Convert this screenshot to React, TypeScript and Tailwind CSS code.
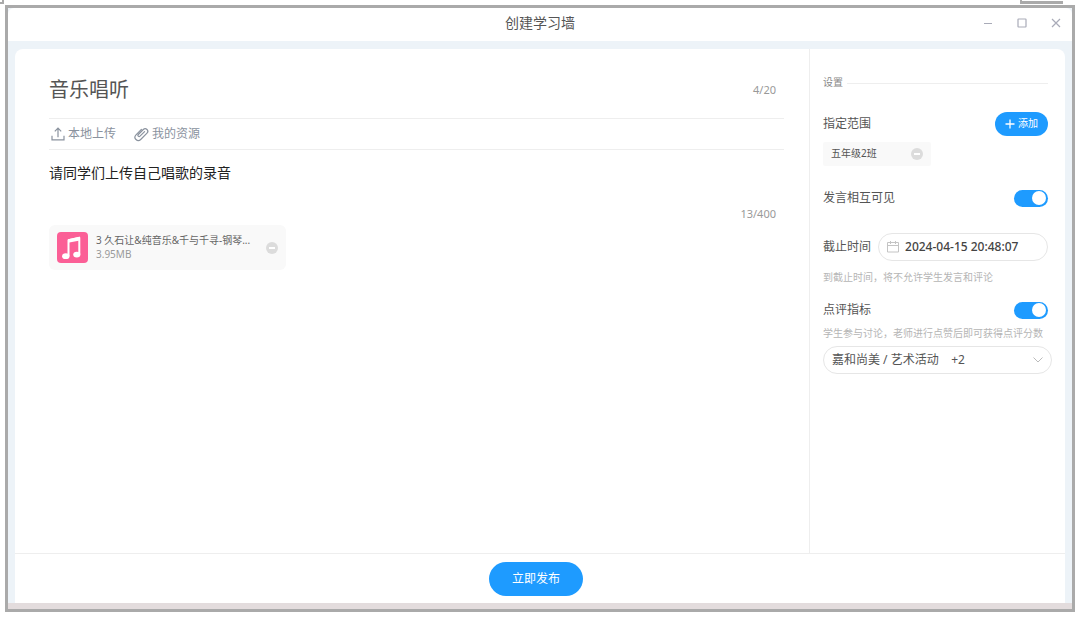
import { useState } from 'react';

function RemoveButton({ label }: { label: string }) {
  return (
    <button
      type="button"
      aria-label={label}
      className="flex h-3 w-3 shrink-0 items-center justify-center rounded-full bg-[#dcdcdc]"
    >
      <span className="h-0.5 w-1.5 bg-white" />
    </button>
  );
}

function Switch({ id }: { id: string }) {
  const [on, setOn] = useState(true);

  return (
    <input
      id={id}
      type="checkbox"
      role="switch"
      checked={on}
      onChange={() => setOn(!on)}
      className="flex h-[17px] w-[34px] shrink-0 appearance-none items-center rounded-full bg-gray-300 px-0.5 before:block before:h-[14px] before:w-[14px] before:rounded-full before:bg-white checked:justify-end checked:bg-[#1e9bff]"
    />
  );
}

function UploadIcon() {
  return (
    <svg width="14" height="14" viewBox="0 0 14 14" fill="none" stroke="currentColor" strokeWidth="1.2">
      <path d="M7 10.2V1.2M3.8 4.3L7 1.1l3.2 3.2M1 8.8v4h12v-4" />
    </svg>
  );
}

function ClipIcon() {
  return (
    <svg width="15" height="15" viewBox="0 0 15 15" fill="none" stroke="currentColor" strokeWidth="1.2" strokeLinecap="round">
      <path d="M10.6 4.6L6 9.2a1.2 1.2 0 0 1-1.7-1.7l5-5a2.6 2.6 0 0 1 3.7 3.7l-6.3 6.3a3.3 3.3 0 0 1-4.7-4.7L7.4 2.4" />
    </svg>
  );
}

function MusicIcon() {
  return (
    <svg width="31" height="31" viewBox="0 0 31 31" className="shrink-0">
      <rect width="31" height="31" rx="4" fill="#fb5f96" />
      <path
        d="M11.5 24V8.2L22.3 5.8v16.6"
        fill="none"
        stroke="#fff"
        strokeWidth="2"
        strokeLinejoin="round"
      />
      <path d="M11 7.2l12-2.4v3.6L11 10.8z" fill="#fff" />
      <ellipse cx="8.8" cy="24.2" rx="3.7" ry="2.9" fill="#fff" />
      <ellipse cx="19.8" cy="22.6" rx="3.6" ry="2.9" fill="#fff" />
    </svg>
  );
}

function TitleBar() {
  return (
    <header className="grid h-[33px] grid-cols-[1fr_auto_1fr] items-center rounded-t-md bg-white pb-[3px]">
      <h1 className="col-start-2 text-sm text-[#555]">创建学习墙</h1>
      <div className="flex items-center justify-end gap-6 pr-[11px] text-[#a9abb8]">
        <button type="button" aria-label="最小化">
          <svg width="10" height="10" viewBox="0 0 10 10" stroke="currentColor">
            <path d="M1 5.5h8" />
          </svg>
        </button>
        <button type="button" aria-label="最大化">
          <svg width="10" height="10" viewBox="0 0 10 10" fill="none" stroke="currentColor" strokeWidth="1.2">
            <rect x="1" y="1" width="8" height="8" rx="0.5" />
          </svg>
        </button>
        <button type="button" aria-label="关闭">
          <svg width="10" height="10" viewBox="0 0 10 10" stroke="currentColor" strokeWidth="1.2">
            <path d="M1 1l8 8M9 1L1 9" />
          </svg>
        </button>
      </div>
    </header>
  );
}

function Editor() {
  return (
    <section className="min-w-0 flex-1 pt-[21px] pr-[25px] pl-[34px]">
      <div className="mb-2 flex h-10 items-center pr-2">
        <input
          aria-label="标题"
          defaultValue="音乐唱听"
          maxLength={20}
          className="min-w-0 flex-1 bg-transparent text-xl text-[#555] outline-none"
        />
        <span className="text-[11px] text-[#999]">4/20</span>
      </div>

      <div className="flex h-8 items-center gap-[18px] border-y border-[#eee] pl-0.5 text-xs text-[#8a929e]">
        <button type="button" className="flex items-center gap-[3px]">
          <UploadIcon />
          本地上传
        </button>
        <button type="button" className="flex items-center gap-[3px]">
          <ClipIcon />
          我的资源
        </button>
      </div>

      <textarea
        aria-label="内容"
        defaultValue="请同学们上传自己唱歌的录音"
        maxLength={400}
        className="mt-[13px] block h-[43px] w-full resize-none bg-transparent text-sm leading-5 text-[#222] outline-none"
      />
      <div className="pr-2 text-right text-[11px] leading-4 text-[#999]">13/400</div>

      <div className="mt-[3px] flex h-[45px] w-[237px] items-center rounded-md bg-[#f9f9f9] px-2">
        <MusicIcon />
        <div className="ml-2 min-w-0 flex-1 pb-0.5 text-[10px] leading-[14px]">
          <p className="whitespace-nowrap text-[#666]">3 久石让&amp;纯音乐&amp;千与千寻-钢琴...</p>
          <p className="text-[#999]">3.95MB</p>
        </div>
        <RemoveButton label="删除附件" />
      </div>
    </section>
  );
}

function Settings() {
  return (
    <aside className="w-64 shrink-0 border-l border-[#eee] pt-[26px] pr-[17px] pl-[13px] text-xs text-[#555]">
      <div className="flex h-4 items-center gap-1">
        <h2 className="text-[10px] text-[#888]">设置</h2>
        <span className="h-px flex-1 bg-[#eee]" />
      </div>

      <div className="mt-[21px] flex h-6 items-center justify-between">
        <span>指定范围</span>
        <button
          type="button"
          className="flex h-6 w-[53px] items-center justify-center gap-[3px] rounded-full bg-[#1e9bff] text-[10px] text-white"
        >
          <svg width="10" height="10" viewBox="0 0 10 10" stroke="currentColor" strokeWidth="1.3">
            <path d="M5 0.5v9M0.5 5h9" />
          </svg>
          添加
        </button>
      </div>
      <div className="mt-1.5 flex h-6 w-[108px] items-center justify-between rounded-xs bg-[#f9f9f9] px-2 text-[10px]">
        五年级2班
        <RemoveButton label="移除班级" />
      </div>

      <div className="mt-5 flex h-6 items-center justify-between">
        <label htmlFor="visible">发言相互可见</label>
        <Switch id="visible" />
      </div>

      <div className="mt-[23px] flex h-7 items-center gap-[7px]">
        <label htmlFor="deadline" className="shrink-0">截止时间</label>
        <div className="flex h-7 min-w-0 flex-1 items-center gap-1.5 rounded-full border border-[#e6e6e6] px-2">
          <svg width="12" height="12" viewBox="0 0 12 12" fill="none" stroke="#c4c4c4" className="shrink-0">
            <path d="M0.5 1.5h11v9.5h-11zM0.5 4.5h11M3.5 0v3M8.5 0v3" />
          </svg>
          <input
            id="deadline"
            defaultValue="2024-04-15 20:48:07"
            className="min-w-0 flex-1 bg-transparent text-xs font-medium text-[#444] outline-none"
          />
        </div>
      </div>
      <p className="mt-2 text-[10px] leading-4 text-[#b5b5b5]">到截止时间，将不允许学生发言和评论</p>

      <div className="mt-[13px] flex h-6 items-center justify-between">
        <label htmlFor="rating">点评指标</label>
        <Switch id="rating" />
      </div>
      <p className="mt-[3px] text-[10px] leading-4 whitespace-nowrap text-[#b5b5b5]">
        学生参与讨论，老师进行点赞后即可获得点评分数
      </p>

      <div className="mt-[5px] -mr-1 grid items-center">
        <select
          aria-label="点评指标分类"
          className="col-start-1 row-start-1 h-7 w-full appearance-none rounded-full border border-[#e6e6e6] bg-white pr-7 pl-2 outline-none"
        >
          <option>嘉和尚美 / 艺术活动{'\u00a0\u00a0\u00a0\u00a0'}+2</option>
        </select>
        <svg
          width="10"
          height="6"
          viewBox="0 0 10 6"
          fill="none"
          stroke="#bbb"
          className="pointer-events-none col-start-1 row-start-1 mr-[9px] justify-self-end"
        >
          <path d="M0.5 0.5L5 5l4.5-4.5" />
        </svg>
      </div>
    </aside>
  );
}

export default function App() {
  return (
    <div className="relative flex min-h-screen bg-white px-[5px] pt-[5px] pb-[7px] font-['Noto_Sans','Noto_Sans_CJK_SC',sans-serif]">
      {/* edges of the windows behind */}
      <span className="absolute top-0 left-0 h-1 w-1 border-r-2 border-b-2 border-[#aaa]" />
      <span className="absolute top-0 right-[17px] h-1 w-[43px] border-b-3 border-l-2 border-[#aaa]" />

      <div className="flex min-w-0 flex-1 flex-col border-3 border-[#aaa] bg-[#edf3f8]">
        <TitleBar />
        <main className="flex flex-1 flex-col px-[7px] pt-2">
          <div className="flex flex-1 flex-col rounded-t-lg bg-white">
            <div className="flex flex-1">
              <Editor />
              <Settings />
            </div>
            <footer className="flex h-[50px] items-center justify-center border-t border-[#eee] pr-2">
              <button type="button" className="h-[34px] w-[94px] rounded-full bg-[#1e9bff] text-xs text-white">
                立即发布
              </button>
            </footer>
          </div>
        </main>
        <div className="h-1.5 bg-[#e3dcdd]" />
      </div>
    </div>
  );
}
